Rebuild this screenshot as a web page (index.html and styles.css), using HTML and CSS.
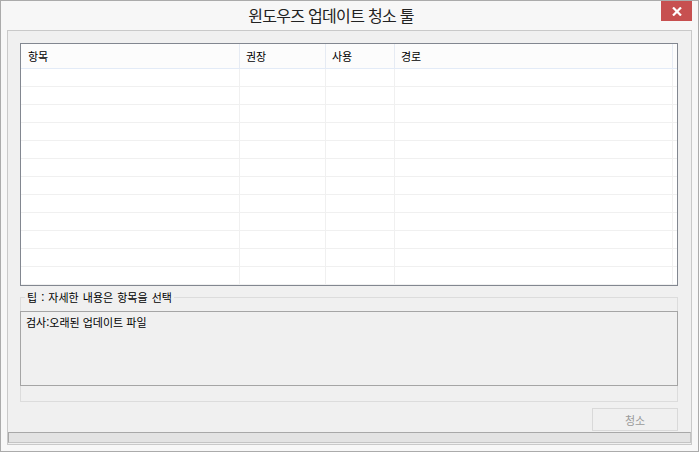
FILE: index.html
```html
<!DOCTYPE html>
<html lang="ko">
<head>
<meta charset="utf-8">
<title>윈도우즈 업데이트 청소 툴</title>
<link rel="stylesheet" href="styles.css">
</head>
<body>
<div class="window">
  <div class="titlebar">
    <div class="title">윈도우즈 업데이트 청소 툴</div>
    <div class="close">
      <svg width="10" height="9" viewBox="0 0 10 9"><path d="M1 0.5 L9 8.5 M9 0.5 L1 8.5" stroke="#fff" stroke-width="2.2"/></svg>
    </div>
  </div>
  <div class="client">
    <div class="content">
      <div class="listview">
        <div class="lv-row lv-head">
          <div class="cell">항목</div>
          <div class="cell">권장</div>
          <div class="cell">사용</div>
          <div class="cell">경로</div>
          <div class="cell last"></div>
        </div>
        <div class="lv-row"><div class="cell"></div><div class="cell"></div><div class="cell"></div><div class="cell"></div><div class="cell last"></div></div>
        <div class="lv-row"><div class="cell"></div><div class="cell"></div><div class="cell"></div><div class="cell"></div><div class="cell last"></div></div>
        <div class="lv-row"><div class="cell"></div><div class="cell"></div><div class="cell"></div><div class="cell"></div><div class="cell last"></div></div>
        <div class="lv-row"><div class="cell"></div><div class="cell"></div><div class="cell"></div><div class="cell"></div><div class="cell last"></div></div>
        <div class="lv-row"><div class="cell"></div><div class="cell"></div><div class="cell"></div><div class="cell"></div><div class="cell last"></div></div>
        <div class="lv-row"><div class="cell"></div><div class="cell"></div><div class="cell"></div><div class="cell"></div><div class="cell last"></div></div>
        <div class="lv-row"><div class="cell"></div><div class="cell"></div><div class="cell"></div><div class="cell"></div><div class="cell last"></div></div>
        <div class="lv-row"><div class="cell"></div><div class="cell"></div><div class="cell"></div><div class="cell"></div><div class="cell last"></div></div>
        <div class="lv-row"><div class="cell"></div><div class="cell"></div><div class="cell"></div><div class="cell"></div><div class="cell last"></div></div>
        <div class="lv-row"><div class="cell"></div><div class="cell"></div><div class="cell"></div><div class="cell"></div><div class="cell last"></div></div>
        <div class="lv-row"><div class="cell"></div><div class="cell"></div><div class="cell"></div><div class="cell"></div><div class="cell last"></div></div>
        <div class="lv-row"><div class="cell"></div><div class="cell"></div><div class="cell"></div><div class="cell"></div><div class="cell last"></div></div>
      </div>
      <div class="group">
        <span class="legend">팁 : 자세한 내용은 항목을 선택</span>
        <div class="textbox">검사:오래된 업데이트 파일</div>
      </div>
      <div class="actions">
        <button class="btn" disabled>청소</button>
      </div>
    </div>
    <div class="statusbar"></div>
  </div>
</div>
</body>
</html>
```
FILE: styles.css
```css
* { box-sizing: border-box; }
html, body { margin: 0; padding: 0; }
body {
  width: 699px;
  height: 452px;
  background: #ffffff;
  font-family: "Noto Sans CJK KR", "Noto Sans", sans-serif;
  font-size: 11px;
  color: #000;
}
.window {
  width: 699px;
  height: 452px;
  border: 1px solid #ababab;
  background: #f7f7f7;
  padding: 0 6px 6px 6px;
  display: flex;
  flex-direction: column;
}
.titlebar {
  height: 29px;
  display: flex;
  align-items: flex-start;
  margin: 0 -6px 0 -6px;
}
.title {
  flex: 1;
  text-align: center;
  font-size: 16px;
  line-height: 29px;
  color: #222;
  letter-spacing: -0.7px;
}
.close {
  width: 31px;
  height: 20px;
  margin-right: 6px;
  background: #c75050;
  display: flex;
  align-items: center;
  justify-content: center;
}
.close svg { display: block; }
.client {
  flex: 1;
  border: 1px solid #c9c9c9;
  background: #f0f0f0;
  display: flex;
  flex-direction: column;
}
.content {
  padding: 12px 13px 0 12px;
  display: flex;
  flex-direction: column;
}
.listview {
  height: 243px;
  border: 1px solid #828790;
  background: #fff;
  overflow: hidden;
}
.lv-row {
  display: grid;
  grid-template-columns: 219px 86px 69px 278px 1fr;
  height: 18px;
  border-bottom: 1px solid #f0f0f0;
}
.lv-row .cell {
  border-right: 1px solid #f0f0f0;
}
.lv-row .cell.last { border-right: none; }
.lv-head {
  height: 25px;
  background: #fcfcfc;
  border-bottom: 1px solid #e3ebf7;
}
.lv-head .cell {
  border-right: 1px solid #e6ebf3;
  padding-left: 6px;
  line-height: 24px;
  white-space: nowrap;
}
.lv-head .cell:first-child { padding-left: 7px; }
.group {
  position: relative;
  margin-top: 11px;
  height: 105px;
  border: 1px solid #dcdcdc;
  padding: 13px 0 0 0;
}
.legend {
  position: absolute;
  left: 4px;
  top: -8px;
  padding: 0 2px;
  line-height: 14px;
  background: #f0f0f0;
  white-space: nowrap;
  word-spacing: 1px;
}
.textbox {
  margin: 0 -1px;
  height: 75px;
  border: 1px solid #a5a5a5;
  background: #f0f0f0;
  padding: 2px 5px;
  line-height: 16px;
}
.actions {
  margin-top: 6px;
  display: flex;
  justify-content: flex-end;
}
.btn {
  width: 86px;
  height: 23px;
  margin: 0;
  border: 1px solid #d9d9d9;
  background: #f0f0f0;
  color: #9a9a9a;
  font-family: "Noto Sans CJK KR", "Noto Sans", sans-serif;
  font-size: 11px;
  padding: 0;
}
.statusbar {
  margin-top: 1px;
  height: 11px;
  border: 1px solid #a8a8a8;
  border-right-color: #c4c4c4;
  border-bottom-color: #c4c4c4;
  background: #e3e3e3;
}
```
